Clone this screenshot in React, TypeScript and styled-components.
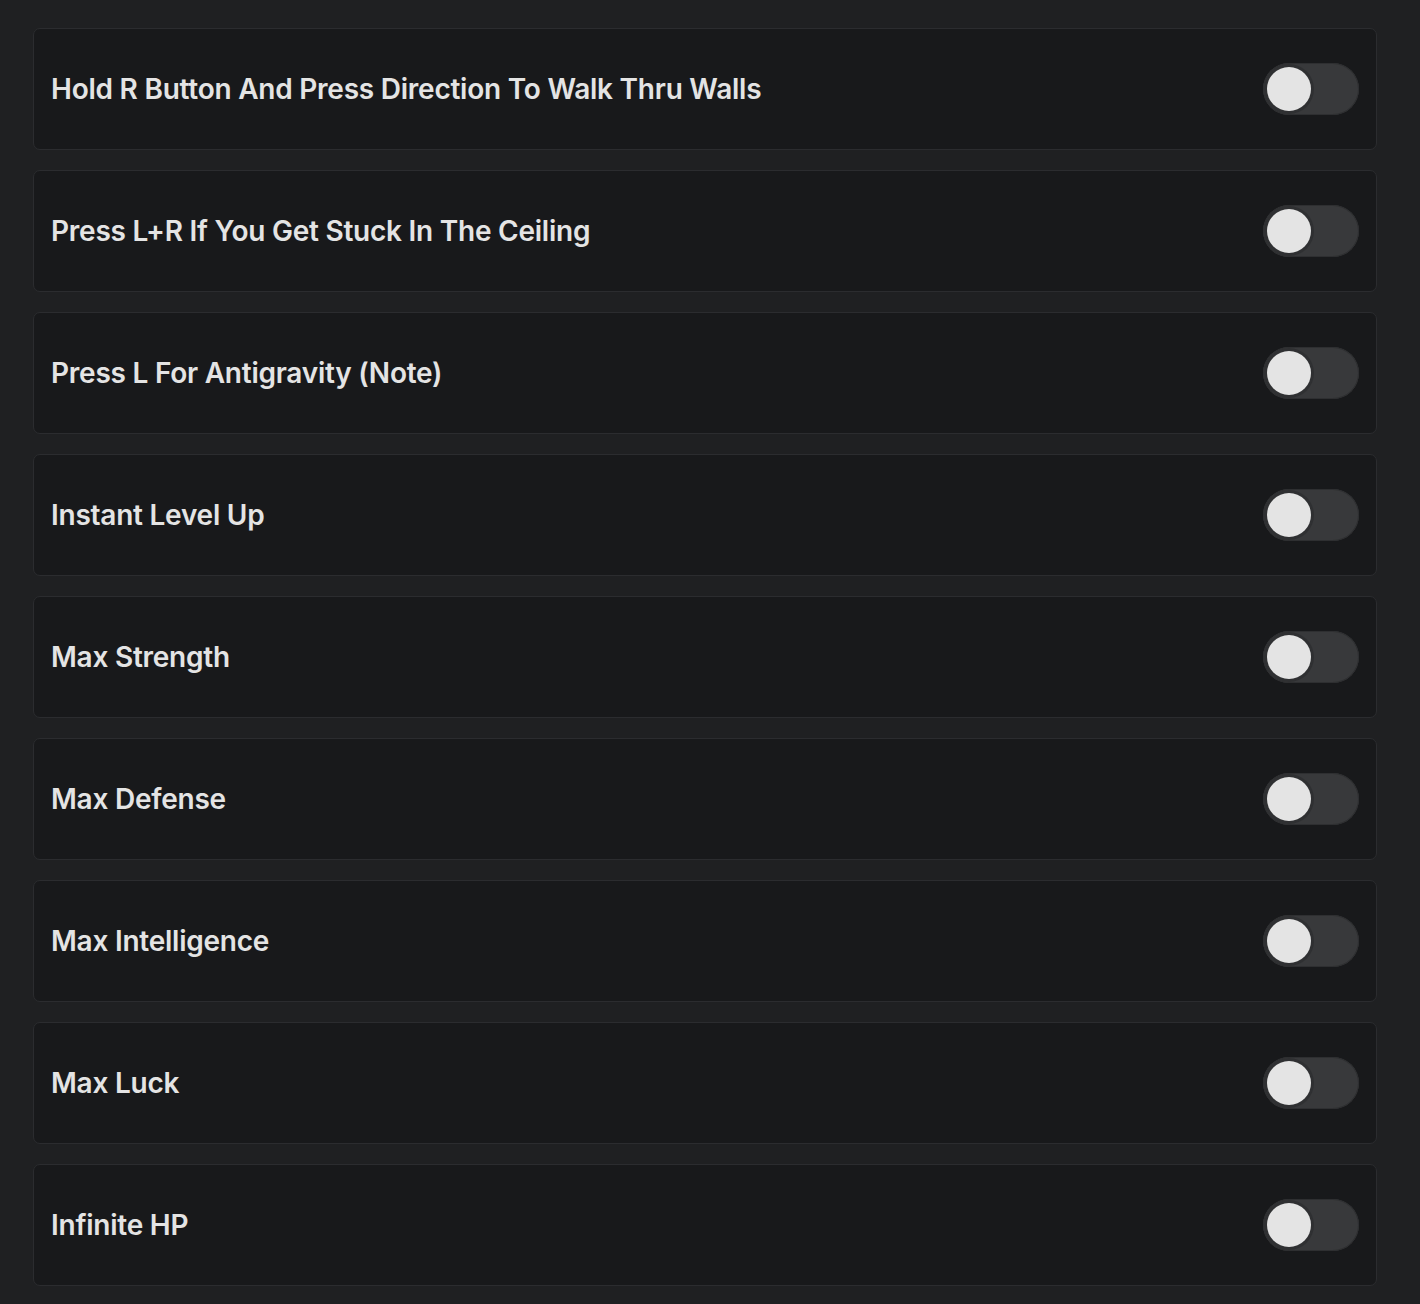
import React, { useState } from "react"
import styled, { createGlobalStyle } from 'styled-components'

const GlobalStyle = createGlobalStyle`
  html, body {
    margin: 0;
    padding: 0;
    background: #1f2022;
  }
  body {
    font-family: "Inter", "Liberation Sans", sans-serif;
  }
`

const Page = styled.div`
  min-height: 1304px;
  box-sizing: border-box;
  padding: 28px 43px 18px 33px;
  display: flex;
  flex-direction: column;
  gap: 20px;
`

const Card = styled.div`
  box-sizing: border-box;
  height: 122px;
  display: flex;
  align-items: center;
  justify-content: space-between;
  padding: 0 17px 0 17px;
  background: #18191b;
  border: 1px solid #2b2c2f;
  border-radius: 7px;
`

const Label = styled.div`
  color: #e4e4e4;
  font-size: 28px;
  font-weight: 600;
  letter-spacing: -0.24px;
  margin-top: -0.5px;
`

const Track = styled.button<{ on: boolean }>`
  box-sizing: border-box;
  width: 96px;
  height: 52px;
  padding: 4px;
  border: none;
  border-radius: 26px;
  background: ${(p) => (p.on ? '#5b6cf0' : '#38393b')};
  display: flex;
  align-items: center;
  cursor: pointer;
  box-shadow: inset 0 0 0 1px #2e2f31;
`

const Thumb = styled.span<{ on: boolean }>`
  width: 44px;
  height: 44px;
  border-radius: 50%;
  background: #e4e4e4;
  box-shadow: 0 0 0 3px #2f3032;
  transform: translateX(${(p) => (p.on ? '44px' : '0')});
  transition: transform 0.15s linear;
`

const cheats = [
  "Hold R Button And Press Direction To Walk Thru Walls",
  "Press L+R If You Get Stuck In The Ceiling",
  "Press L For Antigravity (Note)",
  "Instant Level Up",
  "Max Strength",
  "Max Defense",
  "Max Intelligence",
  "Max Luck",
  "Infinite HP",
]

const Toggle: React.FC = () => {
  const [on, setOn] = useState(false)
  return (
    <Track on={on} onClick={() => setOn(!on)}>
      <Thumb on={on} />
    </Track>
  )
}

const App: React.FC = () => {
  return (
    <Page>
      <GlobalStyle />
      {cheats.map((name) => (
        <Card key={name}>
          <Label>{name}</Label>
          <Toggle />
        </Card>
      ))}
    </Page>
  )
}

export default App;
